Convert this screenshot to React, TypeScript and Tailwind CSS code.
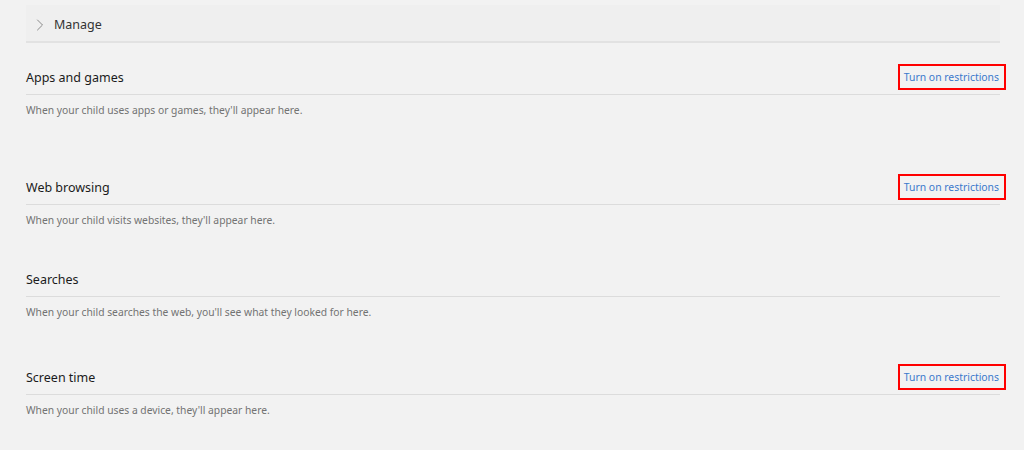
import { ChevronRight } from 'lucide-react';

interface Section {
  title: string;
  description: string;
  restrict: boolean;
  gap: string;
}

const SECTIONS: Section[] = [
  {
    title: 'Apps and games',
    description: "When your child uses apps or games, they'll appear here.",
    restrict: true,
    gap: 'mt-[20px]',
  },
  {
    title: 'Web browsing',
    description: "When your child visits websites, they'll appear here.",
    restrict: true,
    gap: 'mt-[55px]',
  },
  {
    title: 'Searches',
    description: "When your child searches the web, you'll see what they looked for here.",
    restrict: false,
    gap: 'mt-[37px]',
  },
  {
    title: 'Screen time',
    description: "When your child uses a device, they'll appear here.",
    restrict: true,
    gap: 'mt-[43px]',
  },
];

function ActivitySection({ section }: { readonly section: Section }): React.ReactElement {
  return (
    <section className={section.gap}>
      <div className="pb-[5px] border-b border-[#dcdcdc]">
        <div className="flex items-center justify-between h-[26px]">
          <h2 className="pt-[5px] text-[12.5px] text-[#1b1b1b] leading-none">{section.title}</h2>
          {section.restrict && (
            <span className="mr-[-6px] mt-[1px] h-[26px] pl-[4px] pr-[5px] flex items-center border-2 border-[#ff0000]">
              <a className="pt-[1px] text-[10.4px] text-[#3b79cc] leading-none cursor-pointer">
                Turn on restrictions
              </a>
            </span>
          )}
        </div>
      </div>
      <p className="mt-[7px] text-[10.3px] leading-[16px] text-[#737373]">{section.description}</p>
    </section>
  );
}

export default function App(): React.ReactElement {
  return (
    <div
      className="min-h-[450px] bg-[#f2f2f2] pt-[5px] pl-[26px] pr-[24px]"
      style={{ fontFamily: '"Noto Sans", "Open Sans", sans-serif' }}
    >
      <button className="w-full h-[38px] pt-[4px] flex items-center gap-[4px] pl-[4px] bg-[#efefef] border-b-2 border-[#e2e2e2] text-left">
        <ChevronRight className="w-[20px] h-[20px] text-[#8a8a8a]" strokeWidth={1.2} />
        <span className="pt-[1px] text-[12.5px] text-[#333333]">Manage</span>
      </button>

      {SECTIONS.map(s => (
        <ActivitySection key={s.title} section={s} />
      ))}
    </div>
  );
}
